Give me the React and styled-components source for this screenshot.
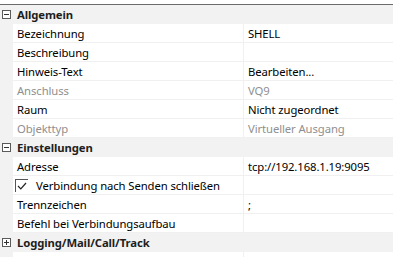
import React from "react";
import styled, { createGlobalStyle } from "styled-components";

const Global = createGlobalStyle`
  html, body { margin: 0; padding: 0; background: #ffffff; }
  body { font-family: "Noto Sans", "Open Sans", sans-serif; font-size: 11.3px; letter-spacing: -0.1px; color: #000; }
`;

const Grid = styled.div`
  width: 393px;
  height: 257px;
  overflow: hidden;
  padding-top: 4px;
  box-sizing: border-box;
  background: #ffffff;
`;

const TopRule = styled.div`
  height: 1px;
  background: #6b6b6b;
`;

const CategoryRow = styled.div`
  display: flex;
  align-items: center;
  height: 19px;
  background: #f2f2f2;
`;

const Toggle = styled.span`
  box-sizing: border-box;
  width: 9px;
  height: 9px;
  margin-left: 2px;
  margin-right: 6px;
  border: 1px solid #5a5a5a;
  position: relative;
  background: #ffffff;
  &::before {
    content: "";
    position: absolute;
    left: 1px;
    right: 1px;
    top: 3px;
    height: 1px;
    background: #333;
  }
  &::after {
    content: "";
    display: ${(p) => (p.$collapsed ? "block" : "none")};
    position: absolute;
    top: 1px;
    bottom: 1px;
    left: 3px;
    width: 1px;
    background: #333;
  }
`;

const CategoryLabel = styled.span`
  font-weight: 700;
  color: #1e1e1e;
`;

const Row = styled.div`
  display: grid;
  grid-template-columns: 13px 230px 1fr;
  height: 19px;
`;

const Gutter = styled.div`
  background: #f2f2f2;
`;

const NameCell = styled.div`
  display: flex;
  align-items: center;
  box-sizing: border-box;
  padding-left: 4px;
  border-bottom: 1px solid #f0f0f0;
  color: ${(p) => (p.$disabled ? "#8f8f8f" : "#000000")};
  white-space: nowrap;
  position: relative;
  z-index: 1;
`;

const ValueCell = styled.div`
  display: flex;
  align-items: center;
  box-sizing: border-box;
  padding-left: 4px;
  border-left: 1px solid #f0f0f0;
  border-bottom: 1px solid #f0f0f0;
  color: ${(p) => (p.$disabled ? "#8f8f8f" : "#000000")};
  white-space: nowrap;
  background: #ffffff;
`;

const CheckBox = styled.span`
  box-sizing: border-box;
  width: 13px;
  height: 13px;
  margin-left: -2px;
  margin-right: 8px;
  border-top: 1px solid #555;
  border-left: 1px solid #555;
  display: inline-flex;
  align-items: center;
  justify-content: center;
`;

const Label = styled.span``;

const groups = [
  {
    title: "Allgemein",
    rows: [
      { name: "Bezeichnung", value: "SHELL" },
      { name: "Beschreibung", value: "" },
      { name: "Hinweis-Text", value: "Bearbeiten..." },
      { name: "Anschluss", value: "VQ9", disabled: true },
      { name: "Raum", value: "Nicht zugeordnet" },
      { name: "Objekttyp", value: "Virtueller Ausgang", disabled: true },
    ],
  },
  {
    title: "Einstellungen",
    rows: [
      { name: "Adresse", value: "tcp://192.168.1.19:9095" },
      { name: "Verbindung nach Senden schließen", value: "", check: true },
      { name: "Trennzeichen", value: ";" },
      { name: "Befehl bei Verbindungsaufbau", value: "" },
    ],
  },
  { title: "Logging/Mail/Call/Track", collapsed: true, rows: [] },
];

export default function App() {
  return (
    <>
      <Global />
      <Grid>
        <TopRule />
        {groups.map((g) => (
          <React.Fragment key={g.title}>
            <CategoryRow>
              <Toggle $collapsed={g.collapsed} />
              <CategoryLabel>{g.title}</CategoryLabel>
            </CategoryRow>
            {g.rows.map((r) => (
              <Row key={r.name}>
                <Gutter />
                <NameCell $disabled={r.disabled}>
                  {r.check && (
                    <CheckBox>
                      <svg width="10" height="8" viewBox="0 0 10 8">
                        <path d="M1 4 L3.8 6.8 L9 1" fill="none" stroke="#222" strokeWidth="1.2" />
                      </svg>
                    </CheckBox>
                  )}
                  <Label>{r.name}</Label>
                </NameCell>
                <ValueCell $disabled={r.disabled}>
                  <Label>{r.value}</Label>
                </ValueCell>
              </Row>
            ))}
          </React.Fragment>
        ))}
        <Row>
          <Gutter />
          <NameCell />
          <ValueCell />
        </Row>
      </Grid>
    </>
  );
}
